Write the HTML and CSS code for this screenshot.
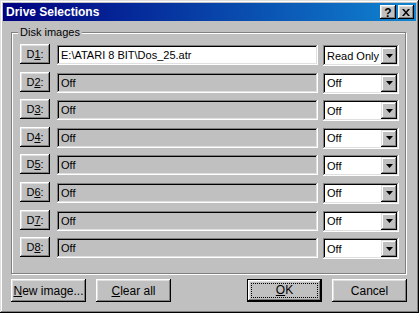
FILE: index.html
```html
<!DOCTYPE html>
<html lang="en">
<head>
  <meta charset="UTF-8">
  <meta name="viewport" content="width=device-width, initial-scale=1.0">
  <title>Drive Selections</title>
  <link rel="stylesheet" href="styles.css">
</head>
<body>
  <div class="window">
    <div class="titlebar">
      <span class="title">Drive Selections</span>
      <div class="title-buttons">
        <button class="tbtn help">?</button>
        <button class="tbtn close">
          <svg width="8" height="7" viewBox="0 0 8 7"><path d="M0 0h2l2 2.5L6 0h2L5 3.5 8 7H6L4 4.5 2 7H0l3-3.5z" fill="#000"/></svg>
        </button>
      </div>
    </div>

    <div class="dialog">
      <fieldset class="group">
        <legend>Disk images</legend>

        <div class="drive-row">
          <button class="btn drive">D<u>1</u>:</button>
          <div class="field">E:\ATARI 8 BIT\Dos_25.atr</div>
          <div class="combo"><span class="value">Read Only</span><span class="drop"><svg width="7" height="4" viewBox="0 0 7 4"><path d="M0 0h7L3.5 4z" fill="#000"/></svg></span></div>
        </div>
        <div class="drive-row">
          <button class="btn drive">D<u>2</u>:</button>
          <div class="field disabled">Off</div>
          <div class="combo"><span class="value">Off</span><span class="drop"><svg width="7" height="4" viewBox="0 0 7 4"><path d="M0 0h7L3.5 4z" fill="#000"/></svg></span></div>
        </div>
        <div class="drive-row">
          <button class="btn drive">D<u>3</u>:</button>
          <div class="field disabled">Off</div>
          <div class="combo"><span class="value">Off</span><span class="drop"><svg width="7" height="4" viewBox="0 0 7 4"><path d="M0 0h7L3.5 4z" fill="#000"/></svg></span></div>
        </div>
        <div class="drive-row">
          <button class="btn drive">D<u>4</u>:</button>
          <div class="field disabled">Off</div>
          <div class="combo"><span class="value">Off</span><span class="drop"><svg width="7" height="4" viewBox="0 0 7 4"><path d="M0 0h7L3.5 4z" fill="#000"/></svg></span></div>
        </div>
        <div class="drive-row">
          <button class="btn drive">D<u>5</u>:</button>
          <div class="field disabled">Off</div>
          <div class="combo"><span class="value">Off</span><span class="drop"><svg width="7" height="4" viewBox="0 0 7 4"><path d="M0 0h7L3.5 4z" fill="#000"/></svg></span></div>
        </div>
        <div class="drive-row">
          <button class="btn drive">D<u>6</u>:</button>
          <div class="field disabled">Off</div>
          <div class="combo"><span class="value">Off</span><span class="drop"><svg width="7" height="4" viewBox="0 0 7 4"><path d="M0 0h7L3.5 4z" fill="#000"/></svg></span></div>
        </div>
        <div class="drive-row">
          <button class="btn drive">D<u>7</u>:</button>
          <div class="field disabled">Off</div>
          <div class="combo"><span class="value">Off</span><span class="drop"><svg width="7" height="4" viewBox="0 0 7 4"><path d="M0 0h7L3.5 4z" fill="#000"/></svg></span></div>
        </div>
        <div class="drive-row">
          <button class="btn drive">D<u>8</u>:</button>
          <div class="field disabled">Off</div>
          <div class="combo"><span class="value">Off</span><span class="drop"><svg width="7" height="4" viewBox="0 0 7 4"><path d="M0 0h7L3.5 4z" fill="#000"/></svg></span></div>
        </div>
      </fieldset>

      <div class="actions">
        <div class="action-group">
          <button class="btn wide"><u>N</u>ew image...</button>
          <button class="btn wide"><u>C</u>lear all</button>
        </div>
        <div class="action-group">
          <button class="btn wide default"><span class="focus"><u>O</u>K</span></button>
          <button class="btn wide">Cancel</button>
        </div>
      </div>
    </div>
  </div>
</body>
</html>
```

FILE: styles.css
```css
* {
  box-sizing: border-box;
}
body {
  margin: 0;
  padding: 0;
  background: #c0c0c0;
  font-family: 'Liberation Sans', Arial, sans-serif;
  font-size: 11px;
  color: #000;
}
.window {
  width: 419px;
  height: 313px;
  padding: 3px;
  background: #c0c0c0;
  box-shadow: inset -1px -1px #000, inset 1px 1px #dfdfdf, inset -2px -2px #808080, inset 2px 2px #fff;
}
.titlebar {
  height: 18px;
  display: flex;
  align-items: center;
  justify-content: space-between;
  padding: 0 2px 0 2px;
  background: linear-gradient(to right, #000080, #1084d0);
}
.title {
  color: #fff;
  font-weight: bold;
  font-size: 12px;
  padding-left: 1px;
}
.title-buttons {
  display: flex;
  gap: 2px;
}
.tbtn {
  width: 16px;
  height: 14px;
  padding: 0;
  border: none;
  background: #c0c0c0;
  display: flex;
  align-items: center;
  justify-content: center;
  font-family: 'Liberation Sans', Arial, sans-serif;
  font-weight: bold;
  font-size: 12px;
  line-height: 1;
  box-shadow: inset -1px -1px #000, inset 1px 1px #fff, inset -2px -2px #808080, inset 2px 2px #dfdfdf;
}
.help {
  padding-top: 1px;
}
.dialog {
  padding: 5px 10px 0 8px;
}
.group {
  margin: 0;
  padding: 6px 6px 0 8px;
  height: 248px;
  border: 1px solid #808080;
  box-shadow: inset 1px 1px #fff, 1px 1px #fff;
  display: flex;
  flex-direction: column;
  gap: 7.6px;
}
.group legend {
  margin-left: -2px;
  padding: 0 2px;
  line-height: 13px;
  background: #c0c0c0;
}
.drive-row {
  display: flex;
  align-items: flex-start;
  height: 20px;
}
.btn {
  padding: 0;
  border: none;
  background: #c0c0c0;
  font-family: 'Liberation Sans', Arial, sans-serif;
  font-size: 11px;
  color: #000;
  box-shadow: inset -1px -1px #000, inset 1px 1px #fff, inset -2px -2px #808080, inset 2px 2px #dfdfdf;
}
.drive {
  width: 30px;
  height: 20px;
  margin-top: -1px;
}
.field {
  flex: 1;
  height: 20px;
  margin-left: 7px;
  padding: 0 4px;
  line-height: 20px;
  background: #fff;
  white-space: nowrap;
  box-shadow: inset -1px -1px #fff, inset 1px 1px #808080, inset -2px -2px #dfdfdf, inset 2px 2px #000;
}
.field.disabled {
  background: #c0c0c0;
}
.combo {
  width: 76px;
  height: 21px;
  margin-left: 5px;
  padding: 2px;
  display: flex;
  align-items: center;
  justify-content: space-between;
  background: #fff;
  white-space: nowrap;
  box-shadow: inset -1px -1px #fff, inset 1px 1px #808080, inset -2px -2px #dfdfdf, inset 2px 2px #000;
}
.value {
  padding-left: 2px;
  font-size: 11px;
}
.drop {
  flex: none;
  width: 16px;
  height: 17px;
  display: flex;
  align-items: center;
  justify-content: center;
  background: #c0c0c0;
  box-shadow: inset -1px -1px #000, inset 1px 1px #dfdfdf, inset -2px -2px #808080, inset 2px 2px #fff;
}
.actions {
  display: flex;
  justify-content: space-between;
  margin-top: 5px;
  margin-right: -1px;
}
.action-group {
  display: flex;
  gap: 10px;
}
.wide {
  width: 75px;
  height: 23px;
  font-size: 12px;
}
.default {
  border: 1px solid #000;
  padding: 3px;
}
.focus {
  display: block;
  height: 100%;
  line-height: 13px;
  border: 1px dotted #000;
}
```
